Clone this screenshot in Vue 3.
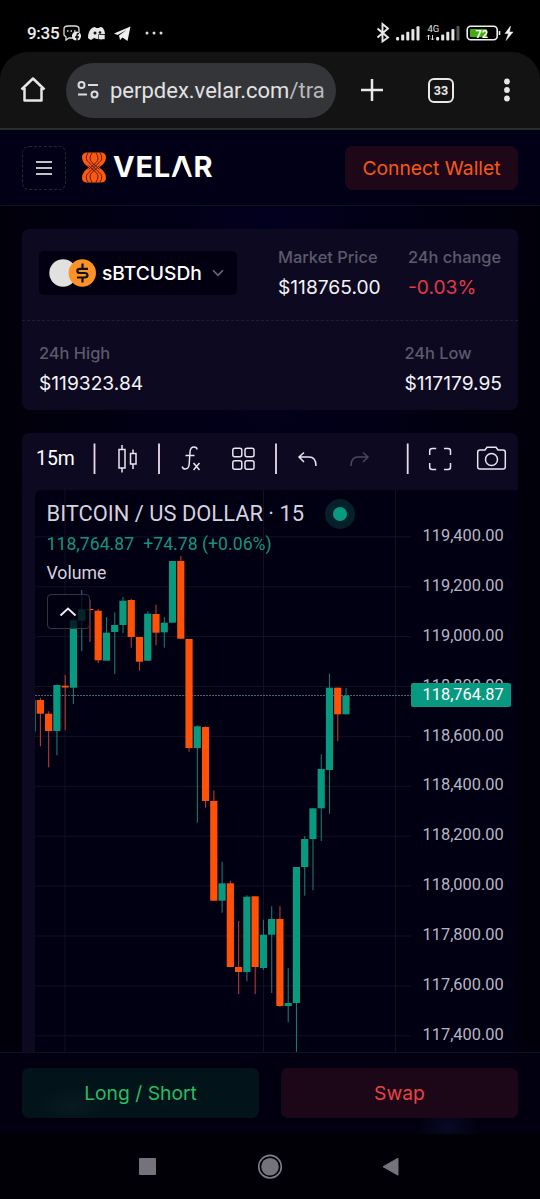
<template>
  <div class="screen">
    <div class="status-bar">
      <span class="clock">9:35</span>
      <svg class="notif" width="82" height="20" viewBox="63 23 82 20">
        <path d="M73 38h-4l-3 2v-3l-2-2v-6q0-3 4-3h7q4 0 4 3v3" fill="none" stroke="#ddd" stroke-width="1.3" />
        <path d="M67 31h1.5M70.500 31h1.500M74 31h1.500" stroke="#ddd" stroke-width="1.600" />
        <circle cx="76.500" cy="36" r="4.600" fill="#e6e6e6" />
        <path d="M77 41v-6q0-1.500 2-1.500M75 37h4" fill="none" stroke="#000" stroke-width="1.300" />
        <path d="M92 28q2-1 3-1l1 1h3l1-1q2 0 3 1 2 3 2 6h-5v5h-3l-3-1-3 2q-2-1-3-2 0-7 4-10z" fill="#e6e6e6" />
        <circle cx="95" cy="33" r="1.500" fill="#111" />
        <circle cx="100" cy="32.500" r="1.300" fill="#111" />
        <path d="M98.500 34.500h6.500v5h-3l-1.500 1v-1h-2z" fill="#e6e6e6" stroke="#000" stroke-width=".6" />
        <path d="M114 33.500 130.500 26.500 127.500 41 122.500 37.500 120 40 119 35.500 126.500 30 117.500 35z" fill="#f0f0f0" />
      </svg>
      <svg width="20" height="6" viewBox="0 0 20 6" class="more">
        <circle cx="2" cy="3" r="1.500" />
        <circle cx="9" cy="3" r="1.500" />
        <circle cx="16" cy="3" r="1.500" />
      </svg>
      <svg class="signals" width="141" height="22" viewBox="375 22 141 22">
        <path d="M377.500 28.500 388 37.500 382.500 41.500V24L388 28.500 377.500 37.500" fill="none" stroke="#e8e8e8" stroke-width="1.900" />
        <g fill="#e6e6e6">
          <rect v-for="n in 5" :key="n" :x="391 + n * 5.1" :y="40.500 - (n * 2.700 + 0.700)" width="3" :height="n * 2.700 + 0.700" rx="1" />
          <rect v-for="n in 4" :key="'b' + n" :x="431 + n * 5.1" :y="40.500 - (n * 2.700 + 0.700)" width="3" :height="n * 2.700 + 0.700" rx="1" />
        </g>
        <rect x="456.500" y="26" width="3" height="14.500" rx="1" fill="#555" />
        <path d="M428.500 40v-5M427 36.500l1.500-1.500 1.500 1.500M432.500 35v5M431 38.500l1.500 1.500 1.500-1.500" fill="none" stroke="#ddd" stroke-width="1" />
        <text x="427.500" y="31.500" class="net">4G</text>
        <rect x="467.200" y="26.200" width="30" height="13.600" rx="3.500" fill="none" stroke="#f0f0f0" stroke-width="1.600" />
        <rect x="470" y="29" width="17" height="8" rx="1" fill="#45ab08" />
        <path d="M499.500 31v4" stroke="#eee" stroke-width="1.600" />
        <text x="475.500" y="37.500" class="batt">72</text>
        <path d="M510.500 26 505 33.500h3.500L506 40.500l7-8.500h-3.500z" fill="#f4f4f4" stroke="#f4f4f4" stroke-width=".5" />
      </svg>
    </div>

    <div class="browser-bar">
      <svg width="26" height="28" viewBox="0 0 26 28" class="home">
        <path d="M1.500 13.500 13 2.500 24.500 13.500M4.500 12v12.500h17V12" fill="none" stroke="#e6e6e6" stroke-width="2.500" stroke-linejoin="round" />
      </svg>
      <div class="address">
        <svg width="22" height="18" viewBox="0 0 22 18" fill="none" stroke="#dcdcde" stroke-width="2">
          <circle cx="4.500" cy="4" r="3" />
          <path d="M11 4h10M1 13.500h9" />
          <circle cx="17.500" cy="13.500" r="3" />
        </svg>
        <span class="url">perpdex.velar.com<em>/tra</em></span>
      </div>
      <svg width="22" height="22" viewBox="0 0 22 22" class="plus">
        <path d="M11 0v22M0 11h22" stroke="#e8e8e8" stroke-width="2.500" />
      </svg>
      <div class="tabs">33</div>
      <svg width="6" height="24" viewBox="0 0 6 24" class="kebab">
        <circle cx="3" cy="3.500" r="2.900" />
        <circle cx="3" cy="12" r="2.900" />
        <circle cx="3" cy="20.500" r="2.900" />
      </svg>
    </div>

    <div class="site">
      <header class="site-header">
        <button class="menu">
          <svg width="18" height="16" viewBox="0 0 18 16"><path d="M1 2h16M1 8h16M1 14h16" stroke="#fff" stroke-width="1.700" /></svg>
        </button>
        <svg class="mark" width="26" height="31" viewBox="0 0 26 32" preserveAspectRatio="none">
          <path d="M5 .5h16q4 1 4 5 0 6-7 10.500 7 4.500 7 10.500 0 4-4 5H5q-4-1-4-5Q1 20.500 8 16 1 11.500 1 5.500q0-4 4-5z" fill="#fc5a10" />
          <g fill="none" stroke="#4a120c" stroke-width=".9">
            <path d="M7 1q-4 6 1 10l10 10q5 4 1 10M19 1q4 6-1 10L8 21q-5 4-1 10" />
            <path d="M11 1q-4 6 0 10l7.500 7M15 1q4 6 0 10l-7.500 7M11 31q-4-6 0-10l7.500-7M15 31q4-6 0-10l-7.500-7" />
          </g>
        </svg>
        <div class="wordmark">VEL<span class="peak">A</span>R</div>
        <button class="connect">Connect Wallet</button>
      </header>

      <section class="stats">
        <div class="stats-top">
          <div class="pair">
            <svg width="47" height="28" viewBox="0 0 47 28">
              <circle cx="14" cy="14" r="13.700" fill="#e1e1e0" />
              <circle cx="33.300" cy="14" r="13.700" fill="#ff9227" />
              <path d="M39 9.800h-8q-2.700 0-2.700 2.200 0 2 2.700 2h4.500q3 0 3 2.300 0 2.200-3 2.200H28M33.500 4.500v5M33.500 18.500v5" fill="none" stroke="#111" stroke-width="2.200" />
            </svg>
            <span>sBTCUSDh</span>
            <svg width="12" height="8" viewBox="0 0 12 8"><path d="m1 1.300 5 5 5-5" fill="none" stroke="#6c6978" stroke-width="1.600" /></svg>
          </div>
          <div class="stat market">
            <label>Market Price</label>
            <b>$118765.00</b>
          </div>
          <div class="stat">
            <label>24h change</label>
            <b class="down">-0.03%</b>
          </div>
        </div>
        <div class="stats-bottom">
          <div class="stat">
            <label>24h High</label>
            <b>$119323.84</b>
          </div>
          <div class="stat">
            <label>24h Low</label>
            <b>$117179.95</b>
          </div>
        </div>
      </section>

      <section class="chart-card">
        <div class="toolbar">
          <span class="interval">15m</span>
          <svg class="tools" width="436" height="57" viewBox="82 433 436 57">
            <path d="M94.500 443.500V474M159 443.500V474M276 443.500V474M407.700 443.500V474" stroke="#e9dcea" stroke-width="1.800" />
            <g fill="none" stroke="#eae4ef" stroke-width="1.500">
              <rect x="119" y="449.500" width="6" height="18.500" />
              <path d="M122 445v4.500M122 468v4.500M133 449.500v4M133 464v5" />
              <rect x="130.500" y="453.500" width="5.500" height="10.500" />
              <path d="M197 449.500q0-2.500-3-2.500-3.700 0-4 5l-.8 12q-.4 5-4 5-2.500 0-3-2.500M185.500 455.500h9M193.500 463l6 7M199.500 463l-6 7" />
              <rect x="232.800" y="448.300" width="9" height="8.500" rx="2" />
              <rect x="245" y="448.300" width="9" height="8.500" rx="2" />
              <rect x="232.800" y="460.800" width="9" height="8.500" rx="2" />
              <rect x="245" y="460.800" width="9" height="8.500" rx="2" />
              <path d="M304 452.500 299 457l5 5M299 457h10q7 0 7 9" />
              <path d="M363 452.500 368 457l-5 5M368 457h-10q-7 0-7 9" stroke="#4b475b" />
              <path d="M429.700 455v-4q0-2.500 2.500-2.500h4M444 448.500h4q2.500 0 2.500 2.500v4M450.500 463v4q0 2.500-2.500 2.500h-4M436.200 469.500h-4q-2.500 0-2.500-2.500v-4" />
              <path d="M480 450h5l2-2.800h9l2 2.800h5q2.300 0 2.300 2.300v14.400q0 2.300-2.300 2.300h-23q-2.300 0-2.300-2.300v-14.400q0-2.300 2.300-2.300z" />
              <circle cx="491.500" cy="459.500" r="6" />
            </g>
          </svg>
        </div>

        <div class="chart">
          <svg class="plot" width="376" height="562" viewBox="35 490 376 562">
            <g stroke="#12111f" stroke-width="1">
              <line v-for="n in 11" :key="n" x1="35" x2="411" :y1="486.900 + n * 49.900" :y2="486.900 + n * 49.900" />
              <path d="M65 490v562M263.500 490v562M395.500 490v562" fill="none" />
            </g>
            <path d="M35 695.500h376" stroke="#4a6470" stroke-width="1" stroke-dasharray="2 1" />
            <g v-for="(c, i) in candles" :key="i" :class="c[0]">
              <rect class="wick" :x="candleX(i) - 0.5" :y="c[3]" width="1.1" :height="c[4] - c[3]" />
              <rect :x="candleX(i) - 3.600" :y="c[1]" width="7.200" :height="c[2] - c[1]" />
            </g>
          </svg>
          <div class="scale">
            <span v-for="p in prices" :key="p">{{ p }}</span>
          </div>
          <div class="price-tag">118,764.87</div>
          <div class="legend">
            <div class="title">BITCOIN / US DOLLAR · 15<i class="live"></i></div>
            <div class="change"><span>118,764.87</span><span>+74.78 (+0.06%)</span></div>
            <div class="volume">Volume</div>
            <div class="collapse">
              <svg width="18" height="11" viewBox="0 0 18 11"><path d="m1.500 9.500 7.500-7 7.500 7" fill="none" stroke="#eee8f2" stroke-width="2" /></svg>
            </div>
          </div>
        </div>
      </section>
    </div>

    <div class="actions">
      <button class="long">Long / Short</button>
      <button class="swap">Swap</button>
    </div>

    <div class="nav-bar">
      <svg width="540" height="65" viewBox="0 0 540 65">
        <rect x="139" y="24" width="17" height="17" rx="1" fill="#76727b" />
        <circle cx="270" cy="32.700" r="11.300" fill="none" stroke="#817e86" stroke-width="1.600" />
        <circle cx="270" cy="32.700" r="8.800" fill="#76727b" />
        <path d="M383 32.700 398 24.200v17z" fill="#76727b" stroke="#76727b" stroke-linejoin="round" />
      </svg>
    </div>
  </div>
</template>

<script setup>
const prices = Array.from({ length: 11 }, (_, i) => `${(119400 - i * 200).toLocaleString('en-US')}.00`)

// [direction, body top, body bottom, high, low]
const candles = [
  ['up', 700, 731.5, 700, 731.5],
  ['dn', 700, 713.7, 698, 746.3],
  ['dn', 713.7, 731, 711.3, 767.3],
  ['up', 685, 731, 684.5, 755.3],
  ['dn', 685.7, 687.5, 675, 730.3],
  ['up', 620.3, 687.7, 618, 704],
  ['up', 609.3, 620.7, 590, 651.3],
  ['dn', 609, 610, 600, 642],
  ['dn', 610.7, 660.3, 609, 663],
  ['up', 632.7, 660.7, 617, 660.7],
  ['up', 625, 632, 612.3, 674],
  ['up', 600.7, 625, 597, 633],
  ['dn', 600, 637, 599, 647.7],
  ['dn', 637, 661.7, 637, 670.7],
  ['up', 613.7, 660.7, 611.3, 660.7],
  ['dn', 614, 632.7, 604.7, 645.3],
  ['up', 622.7, 632.3, 617.3, 647.7],
  ['up', 561, 622.7, 561, 622.7],
  ['dn', 561, 638.7, 556, 638.7],
  ['dn', 639, 748, 639, 751.7],
  ['up', 726.3, 748, 725.3, 822.7],
  ['dn', 727, 801, 726.3, 807.7],
  ['dn', 801, 900.7, 790.3, 900.7],
  ['up', 883.3, 900.7, 861.7, 912.7],
  ['dn', 883.3, 967, 880.7, 967],
  ['dn', 967, 972, 921, 994],
  ['up', 896.7, 972, 895.3, 981.3],
  ['dn', 896.3, 967, 896.3, 994],
  ['up', 934.7, 968, 919.7, 970],
  ['up', 919, 934.7, 906.3, 993],
  ['dn', 919, 1006, 906.3, 1007],
  ['up', 1003, 1006, 968, 1022.3],
  ['up', 867, 1003, 867, 1051.7],
  ['up', 839, 867, 836, 895.7],
  ['up', 808.3, 839, 808, 890.3],
  ['up', 769, 808.3, 754.3, 841],
  ['up', 687.7, 770, 673.7, 813.7],
  ['dn', 687.7, 714.3, 687.7, 741.3],
  ['up', 695.7, 714.3, 688, 714.3]
]

function candleX(i) {
  return 32.1 + i * 8.26
}
</script>

<style>
body {
  margin: 0;
  background: #000;
}
</style>

<style scoped>
.screen {
  width: 540px;
  height: 1199px;
  display: flex;
  flex-direction: column;
  overflow: hidden;
  background: #000;
  color: #fff;
  font-family: Inter, sans-serif;
}

svg {
  display: block;
  flex: none;
}

button {
  border: 0;
  padding: 0;
  font: inherit;
}

.status-bar {
  height: 52px;
  flex: none;
  box-sizing: border-box;
  padding: 23px 24px 9px 27px;
  display: flex;
  align-items: center;
  font-family: Roboto, sans-serif;
}

.clock {
  width: 36px;
  font-size: 17px;
  font-weight: 500;
  color: #eee;
  letter-spacing: -0.3px;
}

.more {
  fill: #ddd;
}

.signals {
  margin-left: auto;
}

.net {
  font-size: 9.5px;
  fill: #e0e0e0;
}

.batt {
  font-size: 11px;
  font-weight: 700;
  fill: #fff;
}

.browser-bar {
  height: 78px;
  flex: none;
  box-sizing: border-box;
  background: #131314;
  border-bottom: 2px solid #2c2c30;
  border-radius: 28px 28px 0 0;
  padding: 0 30px 0 20px;
  display: flex;
  align-items: center;
  font-family: Roboto, sans-serif;
}

.address {
  margin-left: 20px;
  width: 270px;
  height: 55px;
  box-sizing: border-box;
  padding-left: 11px;
  border-radius: 28px;
  background: #343538;
  display: flex;
  align-items: center;
  gap: 11px;
}

.url {
  font-size: 22px;
  color: #e2e2e4;
  white-space: nowrap;
}

.url em {
  font-style: normal;
  color: #b9b9bd;
}

.plus {
  margin-left: 25px;
}

.tabs {
  margin-left: 45px;
  width: 26px;
  height: 25px;
  box-sizing: border-box;
  border: 2.5px solid #e8e8e8;
  border-radius: 6px;
  font-size: 12.5px;
  font-weight: 700;
  line-height: 21px;
  text-align: center;
  color: #e8e8e8;
}

.kebab {
  margin-left: auto;
  fill: #e8e8e8;
}

.site {
  height: 922px;
  flex: none;
  background: radial-gradient(ellipse 270px 700px at 50% 12%, #02001f, #01000a);
}

.site-header {
  height: 76px;
  box-sizing: border-box;
  padding: 0 22px;
  display: flex;
  align-items: center;
  background: #010017;
  border-bottom: 1px solid #10101f;
}

.menu {
  width: 44px;
  height: 44px;
  box-sizing: border-box;
  border: 1px dashed #282535;
  border-radius: 7px;
  background: none;
  display: flex;
  align-items: center;
  justify-content: center;
}

.mark {
  margin-left: 15px;
}

.wordmark {
  margin: -2px 0 0 6px;
  font-size: 29px;
  font-weight: 700;
  line-height: 36px;
  letter-spacing: 0.8px;
}

/* the logo's A has no crossbar */
.peak {
  position: relative;
}

.peak::after {
  content: '';
  position: absolute;
  left: 4px;
  bottom: 6px;
  width: 14px;
  height: 15px;
  background: #010017;
  clip-path: polygon(50% 0, 100% 100%, 0 100%);
}

.connect {
  margin-left: auto;
  width: 173px;
  height: 44px;
  border-radius: 8px;
  background: #1e0817;
  color: #f65a18;
  font-size: 19.3px;
}

.stats {
  margin: 23px 22px 0;
  height: 181px;
  border-radius: 7px;
  background: #0c0920;
}

.stats-top {
  height: 92px;
  box-sizing: border-box;
  padding: 17px 16px 0 17px;
  display: flex;
  border-bottom: 1px dashed #211e30;
}

.pair {
  margin-top: 5px;
  width: 198px;
  height: 44px;
  box-sizing: border-box;
  padding-left: 10px;
  border-radius: 5px;
  background: #020010;
  display: flex;
  align-items: center;
  font-size: 19.2px;
  font-weight: 500;
}

.pair span {
  margin: 0 10px 0 6px;
}

.stat label,
.stat b {
  display: block;
  white-space: nowrap;
}

.stat label {
  font-size: 16.4px;
  font-weight: 500;
  line-height: 22px;
  color: #5d5a6a;
}

.stat b {
  margin-top: 6px;
  font-size: 19.2px;
  font-weight: 400;
  line-height: 26px;
  color: #f4f2f8;
}

.market {
  margin-left: 41px;
  width: 130px;
}

.stat b.down {
  color: #e23945;
}

.stats-bottom {
  padding: 21px 16px 0 17px;
  display: flex;
  justify-content: space-between;
}

.chart-card {
  margin: 23px 22px 0;
  height: 619px;
  border-radius: 7px 7px 0 0;
  background: #0c0920;
}

.toolbar {
  height: 57px;
  display: flex;
}

.interval {
  width: 46px;
  padding-left: 14px;
  font-family: Roboto, sans-serif;
  font-size: 19.4px;
  line-height: 52px;
}

.chart {
  position: relative;
  margin-left: 13px;
  height: 562px;
  display: flex;
  background: #010012;
  border-top-left-radius: 6px;
  font-family: Roboto, sans-serif;
}

.up {
  fill: #089981;
}

.dn {
  fill: #ff5208;
}

.up .wick {
  fill: #16796c;
}

.dn .wick {
  fill: #b53a36;
}

.scale {
  padding: 21px 0 0 11.5px;
  width: 95.5px;
  box-sizing: border-box;
  font-size: 16.4px;
  color: #b9b6c4;
}

.scale span {
  display: block;
  height: 49.9px;
  line-height: 49.9px;
}

.price-tag {
  position: absolute;
  left: 376px;
  top: 193px;
  width: 100px;
  height: 24px;
  box-sizing: border-box;
  padding-left: 11.5px;
  border-radius: 2px;
  background: #089981;
  color: #fff;
  font-size: 16.4px;
  line-height: 23px;
}

.legend {
  position: absolute;
  left: 11.5px;
  top: 9px;
  white-space: nowrap;
}

.title {
  display: flex;
  align-items: center;
  height: 29px;
  margin-bottom: 1px;
  font-size: 21.9px;
  color: #d5d1df;
}

.live {
  margin-left: 21px;
  width: 14px;
  height: 14px;
  border: 8px solid #06202b;
  border-radius: 50%;
  background: #089981;
}

.change {
  display: flex;
  gap: 9px;
  font-size: 17.7px;
  line-height: 30px;
  color: #15937e;
}

.volume {
  font-size: 17.7px;
  line-height: 28px;
  color: #d5d1df;
}

.collapse {
  margin-top: 7px;
  width: 43px;
  height: 35px;
  box-sizing: border-box;
  border: 1px solid #363342;
  border-radius: 4px;
  background: rgba(1, 0, 18, 0.75);
  display: flex;
  align-items: center;
  justify-content: center;
}

.actions {
  height: 82px;
  flex: none;
  box-sizing: border-box;
  padding: 15px 22px 0;
  display: flex;
  gap: 22px;
  border-top: 1px solid #11101f;
  background: radial-gradient(ellipse 30px 26px at 448px 74px, #090925, transparent), #020010;
}

.actions button {
  flex: 1;
  height: 50px;
  padding-bottom: 1px;
  border-radius: 7px;
  font-size: 19.3px;
}

.actions .long {
  background: radial-gradient(ellipse 34px 18px at 50px 38px, #091a20, transparent), #021419;
  color: #29bd62;
}

.actions .swap {
  background: #1c0718;
  color: #e94444;
}

.nav-bar {
  height: 65px;
  background: #010007;
}
</style>
